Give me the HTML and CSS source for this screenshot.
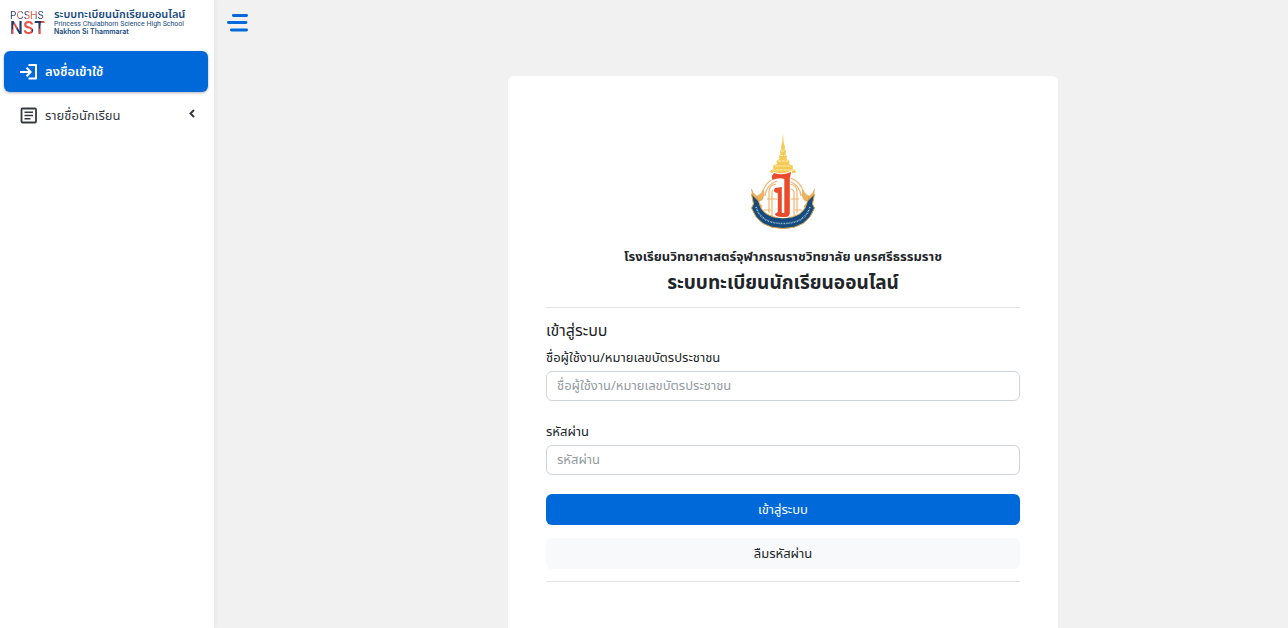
FILE: index.html
```html
<!DOCTYPE html>
<html lang="th">
<head>
<meta charset="utf-8">
<meta name="viewport" content="width=device-width, initial-scale=1">
<title>ระบบทะเบียนนักเรียนออนไลน์</title>
<link rel="stylesheet" href="styles.css">
</head>
<body>
<div class="layout">
  <aside class="sidebar">
    <a class="brand" href="#">
      <span class="brand-mark">
        <span class="mark-small">PCSHS</span>
        <span class="mark-large">NST</span>
      </span>
      <span class="brand-text">
        <strong class="brand-title">ระบบทะเบียนนักเรียนออนไลน์</strong>
        <span class="brand-line">Princess Chulabhorn Science High School</span>
        <span class="brand-line brand-place">Nakhon Si Thammarat</span>
      </span>
    </a>
    <nav class="menu">
      <a class="menu-item active" href="#">
        <svg class="icon" viewBox="0 0 18 18" fill="none" stroke="currentColor" stroke-width="2"><path d="M0 9h10.500M6.500 4.800L10.700 9l-4.200 4.200M8.500 2H16v13.500H8.500" stroke-linejoin="round"/></svg>
        <span>ลงชื่อเข้าใช้</span>
      </a>
      <a class="menu-item" href="#">
        <svg class="icon" viewBox="0 0 18 18" fill="none" stroke="currentColor" stroke-width="1.800"><rect x="1.500" y="1.500" width="14.500" height="14" rx="1"/><path d="M4.500 5.300h8.500M4.500 8.500h8.500M4.500 11.700h6" stroke-width="1.500"/></svg>
        <span>รายชื่อนักเรียน</span>
        <svg class="chevron" viewBox="0 0 8 14" fill="none" stroke="currentColor" stroke-width="2"><path d="M6 1L2.500 4.500 6 8"/></svg>
      </a>
    </nav>
  </aside>
  <main class="main">
    <button class="toggle" type="button" aria-label="เมนู">
      <svg viewBox="0 0 22 18" stroke="currentColor" stroke-width="2.800" stroke-linecap="round"><path d="M6.300 1.500h13.300M1.400 8.500h17.600M4.400 16h15.200"/></svg>
    </button>
    <section class="card">
      <svg class="crest" viewBox="0 0 66 98" role="img" aria-label="ตราโรงเรียน">
        <path fill="#f5cb55" d="M33 0l.8 10 1.200 4-.5 2 1.500 2-.5 3 1.500 2-.5 3 3 2-.5 3 4 1.500-.5 3 3.500 2.500-1 2H21l-1-2 3.500-2.500-.5-3 4-1.500-.5-3 3-2-.5-3 1.500-2-.5-3 1.500-2-.5-2 1.200-4z"/>
        <path d="M31 18h4M30 22.500h6M28 28h10M25 33h16M22 37h22" stroke="#fff6d2" stroke-width=".8" stroke-dasharray="3 .8" fill="none"/>
        <g fill="none" stroke="#f3b36a" stroke-width="1.200">
          <path d="M12.500 66q-1-16 14-21.500M53.500 66q1-16-14-21.500M15 63q1-11 12-15M51 63q-1-11-12-15"/>
          <path d="M19 80V59q0-7 7-8M47 80V59q0-7-7-8M22 83V60q0-4 4-4M44 83V60q0-4-4-4M14 77h7M45 77h7M17 66h10M41 66h8"/>
        </g>
        <g fill="#eeb35d" stroke="#d8873e" stroke-width=".4">
          <path d="M1.500 56q1 4 5 7l1 4-5-3zM7 63q5-2 6-6l1 5-2 5-4 2 4 4-2 4-3-5zM64.500 56q-1 4-5 7l-1 4 5-3zM59 63q-5-2-6-6l-1 5 2 5 4 2-4 4 2 4 3-5z"/>
        </g>
        <path d="M1.500 61l7 7q3 17 24.500 17t24.500-17l7-7-2 10 2 4q-7 20.500-31.500 20.500T1.500 75l2-4z" fill="#164b80" stroke="#e3a542" stroke-width="1"/>
        <path d="M6 74q5 16.500 27 16.500T60 74" fill="none" stroke="#b9c8d8" stroke-width="1.500" stroke-dasharray="1 .9 .6 .7"/>
        <path d="M24 40q8 3 17-1-.5 4-1.200 6v35q0 4-5 4h-3q-6 0-7-3l3-2V60q-3 0-4-2l1-3 7-1v26h2.500V46q-5-2-12 1l-.5-4z" fill="#eb4a2b" stroke="#fff" stroke-width="2" paint-order="stroke"/>
      </svg>
      <p class="school">โรงเรียนวิทยาศาสตร์จุฬาภรณราชวิทยาลัย นครศรีธรรมราช</p>
      <h1 class="title">ระบบทะเบียนนักเรียนออนไลน์</h1>
      <form class="form">
        <h2 class="form-title">เข้าสู่ระบบ</h2>
        <div class="field">
          <label for="user">ชื่อผู้ใช้งาน/หมายเลขบัตรประชาชน</label>
          <input id="user" type="text" placeholder="ชื่อผู้ใช้งาน/หมายเลขบัตรประชาชน">
        </div>
        <div class="field">
          <label for="pass">รหัสผ่าน</label>
          <input id="pass" type="password" placeholder="รหัสผ่าน">
        </div>
        <button class="btn primary" type="submit">เข้าสู่ระบบ</button>
        <button class="btn light" type="button">ลืมรหัสผ่าน</button>
      </form>
    </section>
  </main>
</div>
</body>
</html>
```
FILE: styles.css
```css
* { box-sizing: border-box; }
body {
  margin: 0;
  background: #f1f1f1;
  color: #212529;
  font-family: "Noto Sans Thai", "Noto Sans", sans-serif;
  font-size: 13px;
  line-height: 20px;
}
.layout { display: flex; height: 100vh; overflow: hidden; }
.sidebar {
  flex: 0 0 214px;
  background: #fff;
  box-shadow: 0 0 5px rgba(0, 0, 0, .08);
}
.brand {
  display: flex;
  align-items: flex-start;
  gap: 8px;
  padding: 9px 10px 0;
  color: #174a80;
  text-decoration: none;
}
.brand-mark {
  display: flex;
  flex: 0 0 36px;
  flex-direction: column;
  padding-top: 1px;
  font-family: Inter, sans-serif;
  color: transparent;
  background: linear-gradient(105deg, #1d3b6c 18%, #f04e3e 19% 27%, #1d3b6c 28% 42%, #f04e3e 43% 64%, #1d3b6c 65% 80%, #f04e3e 81%);
  -webkit-background-clip: text;
  background-clip: text;
}
.mark-small { font-size: 10px; line-height: 11px; }
.mark-large { font-size: 17px; line-height: 15px; font-weight: 600; }
.brand-text { display: flex; flex-direction: column; white-space: nowrap; }
.brand-title { font-size: 11px; line-height: 11px; font-weight: 600; }
.brand-line { font: 7px/8px Roboto, sans-serif; }
.brand-line.brand-place { font-family: Inter, sans-serif; font-weight: 600; }
.menu { display: flex; flex-direction: column; gap: 3px; padding: 15px 6px 0 4px; }
.menu-item {
  display: flex;
  align-items: center;
  gap: 7px;
  height: 41px;
  padding: 0 12px 0 16px;
  border-radius: 6px;
  color: #343a40;
  text-decoration: none;
}
.menu-item.active {
  background: #0069d9;
  color: #fff;
  font-weight: 600;
  box-shadow: 0 1px 3px rgba(0, 0, 0, .3);
}
.icon { width: 18px; height: 18px; }
.chevron { width: 8px; height: 14px; margin-left: auto; }
.main {
  flex: 1;
  display: grid;
  grid-template-columns: 64px 1fr;
}
.toggle {
  align-self: start;
  justify-self: start;
  margin: 14px 0 0 13px;
  padding: 0;
  border: 0;
  background: none;
  color: #0069d9;
}
.toggle svg { display: block; width: 22px; height: 18px; }
.card {
  justify-self: center;
  width: 100%;
  max-width: 550px;
  min-height: 600px;
  margin-top: 76px;
  padding: 57px 38px 38px;
  border-radius: 6px;
  background: #fff;
}
.crest { display: block; width: 66px; height: 98px; margin: 0 auto 16px; }
.school { margin: 0; font-weight: bold; text-align: center; }
.title { margin: 0; font-size: 19px; line-height: 34px; font-weight: bold; text-align: center; }
.form {
  display: flex;
  flex-direction: column;
  margin-top: 6px;
  padding: 12px 0;
  border-top: 1px solid #e2e3e5;
  border-bottom: 1px solid #e2e3e5;
}
.form-title { margin: 0 0 4px; font-size: 16px; line-height: 23px; font-weight: normal; }
.field { display: flex; flex-direction: column; margin-bottom: 20px; }
.field label { height: 24px; line-height: 22px; }
.field input {
  height: 30px;
  padding: 0 10px;
  border: 1px solid #ced4da;
  border-radius: 6px;
  background: #fff;
  font: inherit;
}
.field input::placeholder { color: #939ba2; opacity: 1; }
.btn { height: 31px; border: 0; border-radius: 6px; font: inherit; }
.primary { background: #0069d9; color: #fff; }
.field + .primary { margin-top: -1px; }
.light { margin-top: 13px; background: #f8f9fa; color: #212529; }
```
